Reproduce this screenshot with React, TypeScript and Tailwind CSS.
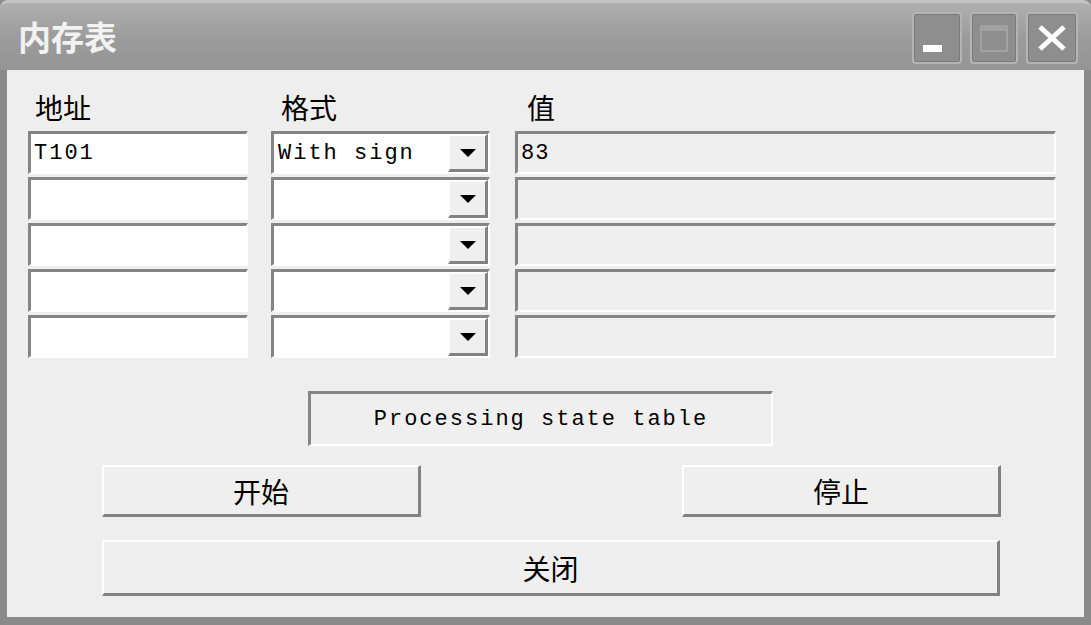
import React from "react";

const cjk = { fontFamily: '"Noto Sans CJK SC", "Noto Sans", sans-serif' };
const mono = { fontFamily: '"Liberation Mono", "DejaVu Sans Mono", monospace' };

const sunken =
  "border-t-[3px] border-l-[3px] border-b-2 border-r-2 border-t-[#858585] border-l-[#858585] border-b-white border-r-white";
const raised =
  "border-t-2 border-l-2 border-b-[3px] border-r-[3px] border-t-white border-l-white border-b-[#828282] border-r-[#828282]";

function TitleButton({ children, className = "" }: { children: React.ReactNode; className?: string }) {
  return (
    <div className={`h-[52px] rounded-[4px] border-2 border-[#b4b4b4] bg-[#8e8e8e] flex items-center justify-center shadow-[inset_0_0_0_1px_#7a7a7a] ${className}`}>
      {children}
    </div>
  );
}

function AddrField({ value }: { value?: string }) {
  return (
    <div className={`h-[43px] bg-white ${sunken} flex items-center px-[3px] text-[22px] tracking-[2px] text-black`} style={mono}>
      {value}
    </div>
  );
}

function FormatField({ value }: { value?: string }) {
  return (
    <div className={`h-[43px] bg-white ${sunken} flex items-center justify-between pl-[4px] text-[22px] tracking-[2px] text-black`} style={mono}>
      <span>{value}</span>
      <div className={`w-[40px] h-[38px] bg-[#efefef] ${raised} flex items-center justify-center`}>
        <svg width="16" height="10" viewBox="0 0 16 10">
          <path d="M0 1h16L8 9z" fill="#000" />
        </svg>
      </div>
    </div>
  );
}

function ValueField({ value }: { value?: string }) {
  return (
    <div className={`h-[43px] bg-[#efefef] ${sunken} flex items-center px-[3px] text-[22px] tracking-[1px] text-black`} style={mono}>
      {value}
    </div>
  );
}

function Btn({ label, className }: { label: string; className: string }) {
  return (
    <div className={`bg-[#efefef] ${raised} flex items-center justify-center text-[28px] text-black ${className}`} style={cjk}>
      {label}
    </div>
  );
}

export default function App() {
  const rows = [0, 1, 2, 3, 4];
  return (
    <div className="w-[1091px] h-[625px] bg-[#8a8a8a] flex flex-col px-[7px] pb-[8px] overflow-hidden">
      <div className="h-[70px] -mx-[7px] px-[18px] flex items-center justify-between bg-gradient-to-b from-[#b0b0b0] via-[#9c9c9c] to-[#959595] border-t-[3px] border-[#c4c4c4] rounded-t-[8px]">
        <span className="text-[33px] font-bold text-[#f2f2f2] tracking-[0px]" style={cjk}>
          内存表
        </span>
        <div className="flex gap-[8px] mr-[-5px] mt-[3px]">
          <TitleButton className="w-[50px]">
            <div className="w-[19px] h-[7px] bg-white mt-[20px] -ml-[10px]" />
          </TitleButton>
          <TitleButton className="w-[48px]">
            <div className="w-[28px] h-[27px] border-2 border-[#a2a2a2] border-t-[6px]" />
          </TitleButton>
          <TitleButton className="w-[52px]">
            <svg width="30" height="26" viewBox="0 0 30 26">
              <path d="M3 2L27 24M27 2L3 24" stroke="#fff" strokeWidth="5" />
            </svg>
          </TitleButton>
        </div>
      </div>

      <div className="flex-1 bg-[#eeeeee] flex flex-col pl-[21px] pr-[28px]">
        <div className="grid grid-cols-[220px_219px_1fr] gap-x-[23px] mt-[18px]">
          <div className="pl-[7px] text-[28px] leading-[38px] text-black" style={cjk}>地址</div>
          <div className="pl-[10px] text-[28px] leading-[38px] text-black" style={cjk}>格式</div>
          <div className="pl-[14px] text-[28px] leading-[38px] text-black" style={cjk}>值</div>
        </div>
        <div className="grid grid-cols-[220px_219px_1fr] gap-x-[23px] gap-y-[3px] mt-[5px]">
          {rows.map((i) => (
            <React.Fragment key={i}>
              <AddrField value={i === 0 ? "T101" : ""} />
              <FormatField value={i === 0 ? "With sign" : ""} />
              <div className="ml-[2px]">
                <ValueField value={i === 0 ? "83" : ""} />
              </div>
            </React.Fragment>
          ))}
        </div>

        <div className="mt-[33px] ml-[280px] w-[465px] h-[55px] bg-[#efefef] border-t-[3px] border-l-[3px] border-b-2 border-r-2 border-t-[#858585] border-l-[#858585] border-b-white border-r-white flex items-center justify-center text-[22px] tracking-[2px] text-black" style={mono}>
          Processing state table
        </div>

        <div className="flex justify-between ml-[74px] mr-[55px] mt-[19px]">
          <Btn label="开始" className="w-[319px] h-[52px]" />
          <Btn label="停止" className="w-[319px] h-[52px]" />
        </div>
        <Btn label="关闭" className="ml-[74px] w-[898px] h-[56px] mt-[23px]" />
      </div>
    </div>
  );
}
